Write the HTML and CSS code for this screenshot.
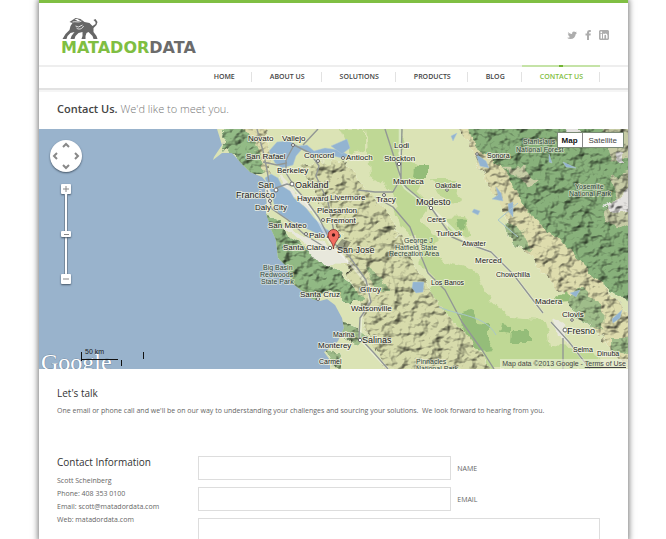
FILE: index.html
```html
<!DOCTYPE html>
<html lang="en">
<head>
<meta charset="utf-8">
<title>Contact Us | Matador Data</title>
<link rel="stylesheet" href="styles.css">
</head>
<body>
<div class="page">
  <header class="header">
    <a class="logo" href="#" aria-label="Matador Data">
      <svg class="bull" viewBox="0 0 34 22" aria-hidden="true">
        <path fill="#666" d="M10 2L13 0L18 1L22 4L27 5L30 8L33 6L33 4L31 2L33 1L35 4L34 7L31 10L31 14L34 18L35 21H31L30 18L26 14L24 15L23 18L23 21H19L20 18V14L16 15L13 18L12 21H8L9 18L12 14L8 15L5 18L4 21H0L3 16L7 12L8 8L10 5L7 4Z"/>
        <path fill="none" stroke="#fff" stroke-width=".8" d="M10 4C13 3 16 5 19 3M13 8L16 9L20 7M14 10C16 12 20 11 21 8"/>
        <path fill="#fff" d="M12 1L15 1L18 3L15 3Z"/>
      </svg>
      <span class="wordmark"><span class="green">MATADOR</span>DATA</span>
    </a>
    <div class="social">
      <a href="#" aria-label="Twitter"><svg viewBox="0 0 10 10"><path d="M0 7.7Q2 8 3 7L1 5.6L2 5.5L.6 3.8L1.6 4L.8 2Q3 4 5 4Q5 1.500 7 1.600L8.400 2.100L9.800 1.700L9 3L10 3L8.700 4.200Q8 9 3.500 9Q1.400 9 0 7.700Z"/></svg></a>
      <a href="#" aria-label="Facebook"><svg viewBox="0 0 10 10"><path d="M4 10V5.500H2.500V3.600H4V2.500Q4 0 6.200 0H7.800V1.900H6.800Q6 1.900 6 2.700V3.600H7.800L7.500 5.500H6V10Z"/></svg></a>
      <a href="#" aria-label="LinkedIn"><svg viewBox="0 0 10 10"><path fill-rule="evenodd" d="M1 0H9L10 1V9L9 10H1L0 9V1ZM1.600 3.800V8.400H3V3.800ZM1.500 1.500V2.900H3.100V1.500ZM4 3.800V8.400H5.400V5.700Q5.500 4.800 6.300 4.800T7.100 5.700V8.400H8.500V5.400Q8.300 3.600 6.700 3.600Q5.800 3.700 5.400 4.300V3.800Z"/></svg></a>
    </div>
  </header>
  <nav class="nav">
    <a href="#">HOME</a><a href="#">ABOUT US</a><a href="#">SOLUTIONS</a><a href="#">PRODUCTS</a><a href="#">BLOG</a><a class="active" href="#">CONTACT US</a>
  </nav>
  <h1 class="title"><b>Contact Us.</b> We'd like to meet you.</h1>

  <section class="map" aria-label="Map">
    <svg class="terrain" viewBox="39 129 589 240" preserveAspectRatio="xMinYMin slice">
      <defs>
        <filter id="hills" x="0" y="0" width="100%" height="100%" color-interpolation-filters="sRGB">
          <feTurbulence type="fractalNoise" baseFrequency=".08 .1" numOctaves="3" seed="8" result="n"/>
          <feDiffuseLighting in="n" surfaceScale="4" diffuseConstant="1.15" lighting-color="#fff" result="relief"><feDistantLight azimuth="225" elevation="60"/></feDiffuseLighting>
          <feTurbulence type="fractalNoise" baseFrequency=".08" numOctaves="3" seed="3" result="e"/>
          <feDisplacementMap in="SourceGraphic" in2="e" scale="12" xChannelSelector="R" yChannelSelector="G" result="shape"/>
          <feBlend in="relief" in2="shape" mode="multiply" result="m"/>
          <feComposite in="m" in2="shape" operator="in"/>
        </filter>
        <filter id="rough"><feTurbulence type="fractalNoise" baseFrequency=".08" numOctaves="3" seed="3"/><feDisplacementMap in="SourceGraphic" scale="10" xChannelSelector="R" yChannelSelector="G"/></filter>
        <clipPath id="land"><path d="M217 129L222 145L214 157L213 160L222 153L232 153L241 163L250 172L262 177L268 184L265 190L267 206L266 213L271 229L276 240L278 258L286 266L292 283L302 291L312 299L320 301L327 299L335 305L342 318L344 328L338 341L332 347L324 352L330 360V369H628V129Z"/></clipPath>
      </defs>
      <rect x="39" y="129" width="589" height="240" fill="#99b3cc"/>
      <g clip-path="url(#land)">
        <rect x="200" y="129" width="428" height="240" fill="#dbe3b5"/>
        <g fill="#bfd895" filter="url(#rough)">
          <path d="M366 129H405L400 155L425 170L415 190L430 205L420 220L440 240L430 250L400 225L390 190L370 175Z"/>
          <path d="M425 245L450 265L475 270L490 300L510 318L545 320L550 345L595 350L605 369H490L470 340L450 330L425 295L438 280L420 262Z"/>
          <path d="M432 180L455 180L462 200L447 206ZM445 217L465 216L470 235L450 236ZM340 129H365V150L350 155Z"/>
        </g>
        <g filter="url(#hills)">
          <path fill="#d7dbab" d="M300 165L345 160L366 190L390 215L404 245L424 280L440 305L462 330L490 369H385L365 330L358 290L340 262L345 240L320 200Z"/>
          <path fill="#dedcad" d="M240 120H262L272 172L258 172Z"/>
          <path fill="#93bb86" d="M225 120H240L256 143L265 172L250 176L236 158L222 148Z"/>
          <path fill="#91b984" d="M262 213L278 218L291 240L316 254L333 269L350 280L366 300L350 305L330 290L315 306L290 290L278 266L270 250Z"/>
          <path fill="#dedcad" d="M455 120H500L530 180L548 225L590 270L640 325V380L608 350L585 310L550 280L520 245L500 205Z"/>
          <path fill="#88b17b" d="M465 120H640V308L603 285L582 265L553 232L528 215L510 181L492 157L472 143Z"/>
          <path fill="#9fbd8a" d="M365 265L382 277L390 292L380 292L370 282ZM343 321L360 328L370 344L357 345L340 333ZM565 298L580 288L602 305L601 330L580 320ZM324 351L338 352L342 366L331 365ZM507 222L522 230L529 250L512 246ZM610 338H640V355L610 350Z"/>
          <path fill="#c6cba5" d="M600 120H640V150L610 162ZM612 175L640 170V230L602 222L607 205L617 199ZM500 168L523 167L540 180L530 185Z"/>
        </g>
        <g fill="#e8e8dc" filter="url(#rough)"><path d="M280 225L315 240L340 250L349 265L321 264L304 244ZM553 318L565 324L568 344L558 336ZM278 174L292 188L316 209L312 211L284 191ZM267 182L276 190L270 205L266 200Z"/></g>
        <g fill="#94bd79" filter="url(#rough)"><path d="M414 166H427V178H413ZM459 314L472 310L480 322L489 323L489 340L494 350L478 352L464 334ZM501 324L510 326V334L499 332ZM512 332H529V341H511ZM456 219L466 220L465 229L457 227ZM556 298L567 291L570 302L557 303Z"/></g>
        <g fill="#e4e2e0" filter="url(#hills)"><path d="M603 206L618 200L632 188V210L613 213ZM563 125H580V138L569 140ZM614 155L624 151V163Z"/></g>
        <g fill="#93b4d1" stroke="#b3c8d3" stroke-width=".5">
          <path d="M269 151L277 142L289 141L298 146L307 145L314 151L325 148L339 150L350 156L342 158L324 154L311 155L302 149L296 156L293 165L282 168L275 163Z"/>
          <path d="M265 178L271 174L278 178L282 186L290 191L294 198L306 208L314 218L326 229L336 235L334 240L318 234L301 226L289 220L279 214L274 204L272 194L269 188Z"/>
          <path d="M476 154L486 161L489 168L480 166ZM496 187L501 193L503 201L492 199L498 195ZM508 204L513 202V217L509 212ZM413 282L424 282L423 292L416 293L412 288ZM474 209L480 211L478 215L472 212ZM451 136L457 133L453 141ZM570 293L580 290L576 297ZM612 319L622 310L620 318L613 323ZM549 154L552 163L549 162ZM563 162L576 168L566 167ZM331 146L347 139L350 148L342 154Z"/>
        </g>
        <g fill="none" stroke="#fff" stroke-width="2.6" stroke-opacity=".4"><path d="M400 129L400 180L405 188L432 209L466 242L491 252L513 274L543 313M551 322L569 342L590 369M292 186L312 209L330 243L350 263L368 285L370 301L361 318L360 339L372 352L388 369"/></g>
        <g fill="none" stroke="#929795" stroke-width="1.4" stroke-linejoin="round">
          <path d="M385 129L395 160L401 178L393 192H375L358 190M401 180V166L402 129M400 180L407 188L432 209L452 237L466 243L491 252L513 274L543 313M551 322L569 342L590 369M375 197L393 207L410 227L421 256L428 273L445 290L462 322L482 350L494 369M563 338V369"/>
          <path d="M257 129L263 151L267 170L270 188M263 162L277 165L287 163M294 145L286 160V173L296 189L306 200L319 218L330 240L349 256L366 280L371 302L360 318L359 337L374 353L388 369M276 188L287 184L294 186M294 145L310 153L319 166L316 176L328 202L334 232M267 190L272 209L288 220L305 235L328 249M318 129L303 145"/>
        </g>
        <path d="M439 307C460 316 485 315 496 335M518 203L498 220L518 237" fill="none" stroke="#a8c5ca"/>
      </g>
      <g class="dots">
        <circle cx="276" cy="190" r="2"/><circle cx="292" cy="184" r="2"/><circle cx="323" cy="220" r="1.5"/><circle cx="306" cy="234" r="1.5"/><circle cx="343" cy="158" r="1.5"/><circle cx="318" cy="161" r="1.5"/><circle cx="399" cy="164" r="1.7"/><circle cx="431" cy="208" r="1.7"/><circle cx="565" cy="330" r="2"/><circle cx="360" cy="340" r="1.7"/><circle cx="318" cy="299" r="1.5"/><circle cx="330" cy="248" r="1.7"/><circle cx="384" cy="195" r="1.5"/><circle cx="293" cy="145" r="1.5"/><circle cx="270" cy="201" r="1.5"/><circle cx="447" cy="190" r="1.3"/><circle cx="572" cy="320" r="1.3"/><circle cx="477" cy="154" r="1.3"/>
      </g>
      <g class="town">
        <text x="248" y="141">Novato</text><text x="282" y="141">Vallejo</text><text x="246" y="159">San Rafael</text><text x="304" y="158">Concord</text><text x="346" y="160">Antioch</text><text x="277" y="173">Berkeley</text>
        <text x="297" y="201">Hayward</text><text x="330" y="200">Livermore</text><text x="255" y="210">Daly City</text><text x="317" y="213">Pleasanton</text><text x="326" y="223">Fremont</text><text x="268" y="228">San Mateo</text><text x="309" y="238">Palo Alto</text><text x="283" y="250">Santa Clara</text>
        <text x="300" y="297">Santa Cruz</text><text x="360" y="292">Gilroy</text><text x="351" y="311">Watsonville</text><text x="318" y="348">Monterey</text><text x="394" y="148">Lodi</text><text x="384" y="161">Stockton</text><text x="393" y="184">Manteca</text><text x="376" y="202">Tracy</text><text x="436" y="236">Turlock</text><text x="475" y="263">Merced</text><text x="535" y="304">Madera</text><text x="562" y="317">Clovis</text>
      </g>
      <g class="village">
        <text x="333" y="337">Marina</text><text x="319" y="364">Carmel</text><text x="487" y="158">Sonora</text><text x="435" y="188">Oakdale</text><text x="427" y="222">Ceres</text><text x="462" y="246">Atwater</text><text x="496" y="277">Chowchilla</text><text x="431" y="285">Los Banos</text><text x="573" y="352">Selma</text><text x="597" y="356">Dinuba</text>
      </g>
      <g class="city"><text x="258" y="188">San</text><text x="236" y="198">Francisco</text><text x="295" y="188">Oakland</text><text x="337" y="253">San Jose</text><text x="416" y="205">Modesto</text><text x="362" y="343">Salinas</text><text x="567" y="334">Fresno</text></g>
      <g class="park">
        <text x="263" y="270">Big Basin</text><text x="260" y="277">Redwoods</text><text x="261" y="284">State Park</text><text x="404" y="243">George J</text><text x="395" y="250">Hatfield State</text><text x="389" y="256">Recreation Area</text><text x="523" y="144">Stanislaus</text><text x="516" y="152">National Forest</text><text x="575" y="189">Yosemite</text><text x="569" y="196">National Park</text><text x="416" y="364">Pinnacles</text><text x="416" y="371">National Park</text>
      </g>
      <path d="M335 248L342 239L351 242L346 250Z" fill="#333" opacity=".4"/>
      <path d="M333.500 249C333 242 328 240 328 235A5.500 5.500 0 0 1 339 235C339 240 334 242 333.500 249Z" fill="#f36c60" stroke="#7b2b26" stroke-width=".8"/><circle cx="333.500" cy="235" r="1.700" fill="#431512"/>
      <text x="41" y="370" class="google">Google</text>
      <g fill="none" stroke="#111"><path d="M81.500 352V361M81 359.500H118M121.500 360V366M143.500 352V359"/></g>
      <text x="85" y="354" class="scale">50 km</text>
    </svg>
    <div class="controls">
      <button class="pan" aria-label="Pan"><svg viewBox="0 0 32 32"><path d="M13 7L16 4L19 7M13 25L16 28L19 25M7 13L4 16L7 19M25 13L28 16L25 19"/></svg></button>
      <button class="zoom" aria-label="Zoom in"><svg viewBox="0 0 10 10"><path d="M2 5H8M5 2V8"/></svg></button>
      <div class="track"><input type="range" aria-label="Zoom" value="50"></div>
      <button class="zoom" aria-label="Zoom out"><svg viewBox="0 0 10 10"><path d="M2 5H8"/></svg></button>
    </div>
    <div class="types"><button class="on">Map</button><button>Satellite</button></div>
    <div class="credit">Map data ©2013 Google - <a href="#">Terms of Use</a></div>
  </section>

  <section class="intro">
    <h2>Let's talk</h2>
    <p>One email or phone call and we'll be on our way to understanding your challenges and sourcing your solutions.&nbsp; We look forward to hearing from you.</p>
  </section>
  <section class="contact">
    <div class="info">
      <h2>Contact Information</h2>
      <p>Scott Scheinberg<br>Phone: 408 353 0100<br>Email: scott@matadordata.com<br>Web: matadordata.com</p>
    </div>
    <form class="form">
      <div class="field"><input id="name" type="text"><label for="name">NAME</label></div>
      <div class="field"><input id="email" type="email"><label for="email">EMAIL</label></div>
      <textarea aria-label="Message"></textarea>
    </form>
  </section>
</div>
</body>
</html>
```
FILE: styles.css
```css
* { box-sizing: border-box; }
body { margin: 0; background: #fff; font-family: "Open Sans", sans-serif; font-size: 7px; color: #666; }
a { color: inherit; text-decoration: none; }
button { padding: 0; font: inherit; color: inherit; }
.page { display: flex; flex-direction: column; min-height: 100vh; margin: 0 38px 0 39px; border-top: 3px solid #80bf43; background: #fff; box-shadow: 0 0 6px 1px #777; }
.header { display: flex; justify-content: space-between; height: 62px; padding: 15px 19px 0 22px; }
.logo { display: flex; flex-direction: column; }
.bull { width: 35px; height: 22px; overflow: visible; margin-left: 1px; }
.wordmark { font: bold 16px/15px "DejaVu Sans", sans-serif; color: #6b6b6b; }
.green { color: #7fbe42; }
.social { display: flex; gap: 6px; padding-top: 12px; }
.social svg { display: block; width: 10px; height: 10px; fill: #adadad; }
.nav { display: flex; justify-content: flex-end; height: 25px; padding-right: 28px; border-top: 2px solid #eee; border-bottom: 2px solid #e2e2e2; box-shadow: 0 2px 0 #f5f5f5; font-size: 7px; font-weight: 600; line-height: 20px; color: #444; }
.nav a { position: relative; padding: 0 17px 0 18px; }
.nav a::after { content: ""; position: absolute; right: 0; top: 5px; height: 10px; border-right: 1px solid #e2e2e2; }
.nav .active { color: #7fbe42; }
.nav .active::before { content: ""; position: absolute; left: 0; right: 0; top: -2px; height: 2px; background: radial-gradient(circle at center, #72b433 2px, #c5e3a7 2px); }
.title { margin: 0; padding: 11px 18px 0; height: 39px; font-size: 11px; line-height: 16px; font-weight: 300; color: #777; }
.title b { font-weight: 600; color: #444; }
.map { position: relative; height: 240px; overflow: hidden; background: #99b3cc; font-family: "Liberation Sans", sans-serif; }
.terrain { display: block; width: 100%; height: 100%; }
.terrain text { fill: #222; stroke: #f3f4e4; stroke-width: 2px; stroke-opacity: .75; paint-order: stroke; stroke-linejoin: round; }
.town { font-size: 8px; }
.village { font-size: 7px; }
.city { font-size: 9px; }
.park { font-size: 7px; }
.terrain .park text { fill: #34493c; stroke-opacity: .5; }
.dots { fill: #fff; stroke: #666; stroke-width: 1px; }
.terrain .scale { font-size: 7px; stroke: none; }
.terrain .google { font: 24px "Liberation Serif", serif; fill: #fff; stroke: #647b92; stroke-width: 1px; }
.controls { position: absolute; left: 11px; top: 11px; display: flex; flex-direction: column; align-items: center; }
.controls button { border: 0; background: #fff; box-shadow: 0 1px 2px #456; }
.controls svg { display: block; fill: none; stroke: #888; }
.controls .pan { width: 32px; height: 32px; margin-bottom: 12px; border-radius: 50%; }
.pan svg { stroke-width: 2px; }
.controls .zoom { width: 10px; height: 10px; border-radius: 1px; }
.track { display: flex; width: 10px; height: 80px; background: linear-gradient(90deg, transparent 3px, #75899d 3px 4px, #fff 4px 6px, #75899d 6px 7px, transparent 7px); }
.track input { appearance: none; width: 10px; height: 80px; margin: 0; writing-mode: vertical-lr; background: transparent; }
.track input::-webkit-slider-thumb { appearance: none; width: 10px; height: 6px; border-radius: 1px; background: linear-gradient(#888, #888) center / 5px 1px no-repeat #fff; box-shadow: 0 1px 2px #456; }
.types { position: absolute; right: 4px; top: 3px; display: flex; height: 16px; border: 1px solid #7b8a76; background: #fff; font-size: 8px; color: #444; }
.types button { border: 0; padding: 0 6px; background: #fff; }
.types .on { padding: 0 4px; border-right: 1px solid #888; font-weight: bold; color: #111; }
.credit { position: absolute; right: 0; bottom: 0; padding: 0 2px; background: rgba(245, 245, 230, .5); font-size: 7px; line-height: 10px; color: #444; white-space: nowrap; }
.credit a { text-decoration: underline; }
h2 { margin: 0; font-size: 10px; line-height: 14px; font-weight: 500; color: #333; }
.intro { padding: 17px 18px 0; height: 86px; }
.intro p { margin: 5px 0 0; line-height: 12px; }
.contact { display: flex; flex: 1; padding: 0 28px 0 18px; }
.info { width: 141px; }
.info p { margin: 5px 0 0; line-height: 13px; }
.form { display: flex; flex: 1; flex-direction: column; gap: 7px; padding-top: 1px; }
.field { display: flex; align-items: center; gap: 6px; }
.field input, textarea { border: 1px solid #ddd; background: #fff; font: inherit; }
.field input { width: 63%; height: 24px; }
.field label { font-size: 7px; }
textarea { display: block; flex: 1; width: 100%; height: 21px; min-height: 21px; border-bottom: 0; resize: none; }
```
